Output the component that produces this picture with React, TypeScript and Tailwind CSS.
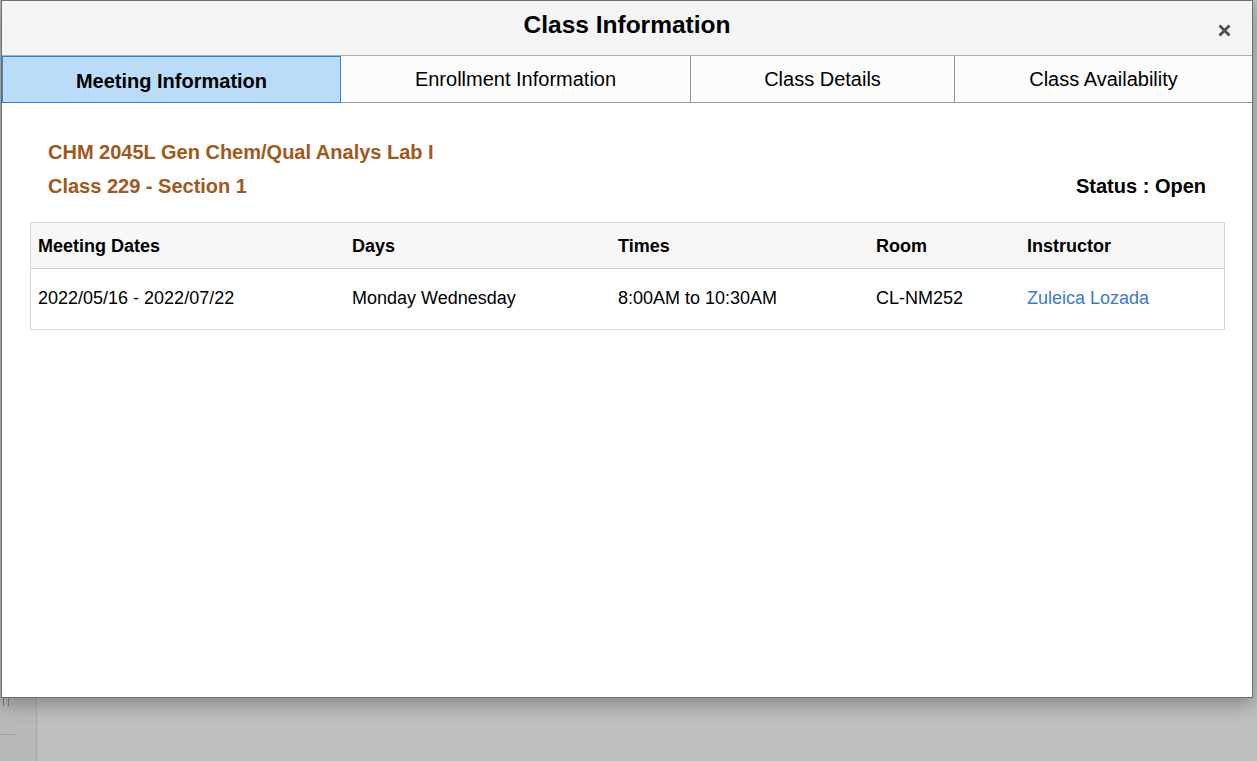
import React from "react";

const cols = "grid grid-cols-[314px_266px_258px_151px_1fr]";

export default function App() {
  return (
    <div
      className="relative w-[1257px] h-[761px] overflow-hidden bg-[#bfbfbf]"
      style={{ fontFamily: '"Liberation Sans", Arial, sans-serif' }}
    >
      {/* background page */}
      <div className="flex h-full">
        <div className="w-[37px] h-full bg-[#b9b9b9] border-r border-[#a9a9a9] flex flex-col">
          <div className="h-[698px]" />
          <div className="flex gap-[4px] pl-[3px] h-[8px]">
            <div className="w-[1px] h-full bg-[#7d7d8a]" />
            <div className="w-[1px] h-full bg-[#7d7d8a]" />
          </div>
          <div className="h-[28px]" />
          <div className="w-[15px] h-[1px] bg-[#9c9c9c]" />
        </div>
        <div className="flex-1" />
      </div>

      {/* modal */}
      <div className="absolute left-[1px] top-0 w-[1252px] h-[698px] bg-white border border-[#6f6f6f] shadow-[0_6px_18px_rgba(0,0,0,0.3)] flex flex-col">
        <div className="relative h-[55px] shrink-0 bg-[#f4f4f4] border-b border-[#a9b2bb] flex justify-center pt-[12px]">
          <div className="text-[24.5px] leading-[24px] font-bold text-black">Class Information</div>
          <button className="absolute right-[21px] top-[23px] w-[13px] h-[13px] flex items-center justify-center">
            <svg width="13" height="13" viewBox="0 0 13 13">
              <path d="M1.5 1.5 L11.5 11.5 M11.5 1.5 L1.5 11.5" stroke="#4d4d4d" strokeWidth="2.8" strokeLinecap="butt" />
            </svg>
          </button>
        </div>

        <div className="flex h-[47px] shrink-0 text-[20px] text-black">
          <div className="w-[339px] border border-[#2f7ed8] bg-[#bbdcf8] flex items-center justify-center pt-[3px] font-bold">
            Meeting Information
          </div>
          <div className="w-[350px] bg-[#fcfcfc] border-r border-b border-[#8e99a4] flex items-center justify-center">
            Enrollment Information
          </div>
          <div className="w-[264px] bg-[#fcfcfc] border-r border-b border-[#8e99a4] flex items-center justify-center">
            Class Details
          </div>
          <div className="flex-1 bg-[#fcfcfc] border-b border-[#8e99a4] flex items-center justify-center">
            Class Availability
          </div>
        </div>

        <div className="flex flex-col">
          <div className="pl-[46px] pr-[46px] pt-[37px]">
            <div className="text-[20px] leading-[24px] font-bold text-[#a0581c]">
              CHM 2045L Gen Chem/Qual Analys Lab I
            </div>
            <div className="mt-[10px] flex justify-between text-[20px] leading-[24px] font-bold">
              <span className="text-[#a0581c]">Class 229 - Section 1</span>
              <span className="text-black">Status : Open</span>
            </div>
          </div>

          <div className="ml-[28px] mr-[27px] mt-[24px] border border-[#d3d7dc] text-[18px] text-black">
            <div className={`${cols} h-[46px] pt-[2px] bg-[#f7f7f7] border-b border-[#d3d7dc] font-bold items-center`}>
              <div className="pl-[7px]">Meeting Dates</div>
              <div className="pl-[7px]">Days</div>
              <div className="pl-[7px]">Times</div>
              <div className="pl-[7px]">Room</div>
              <div className="pl-[7px]">Instructor</div>
            </div>
            <div className={`${cols} h-[60px] pt-[18px] leading-[22px]`}>
              <div className="pl-[7px]">2022/05/16 - 2022/07/22</div>
              <div className="pl-[7px]">Monday Wednesday</div>
              <div className="pl-[7px]">8:00AM to 10:30AM</div>
              <div className="pl-[7px]">CL-NM252</div>
              <div className="pl-[7px] text-[#3b78cf]">Zuleica Lozada</div>
            </div>
          </div>
        </div>
      </div>
    </div>
  );
}
